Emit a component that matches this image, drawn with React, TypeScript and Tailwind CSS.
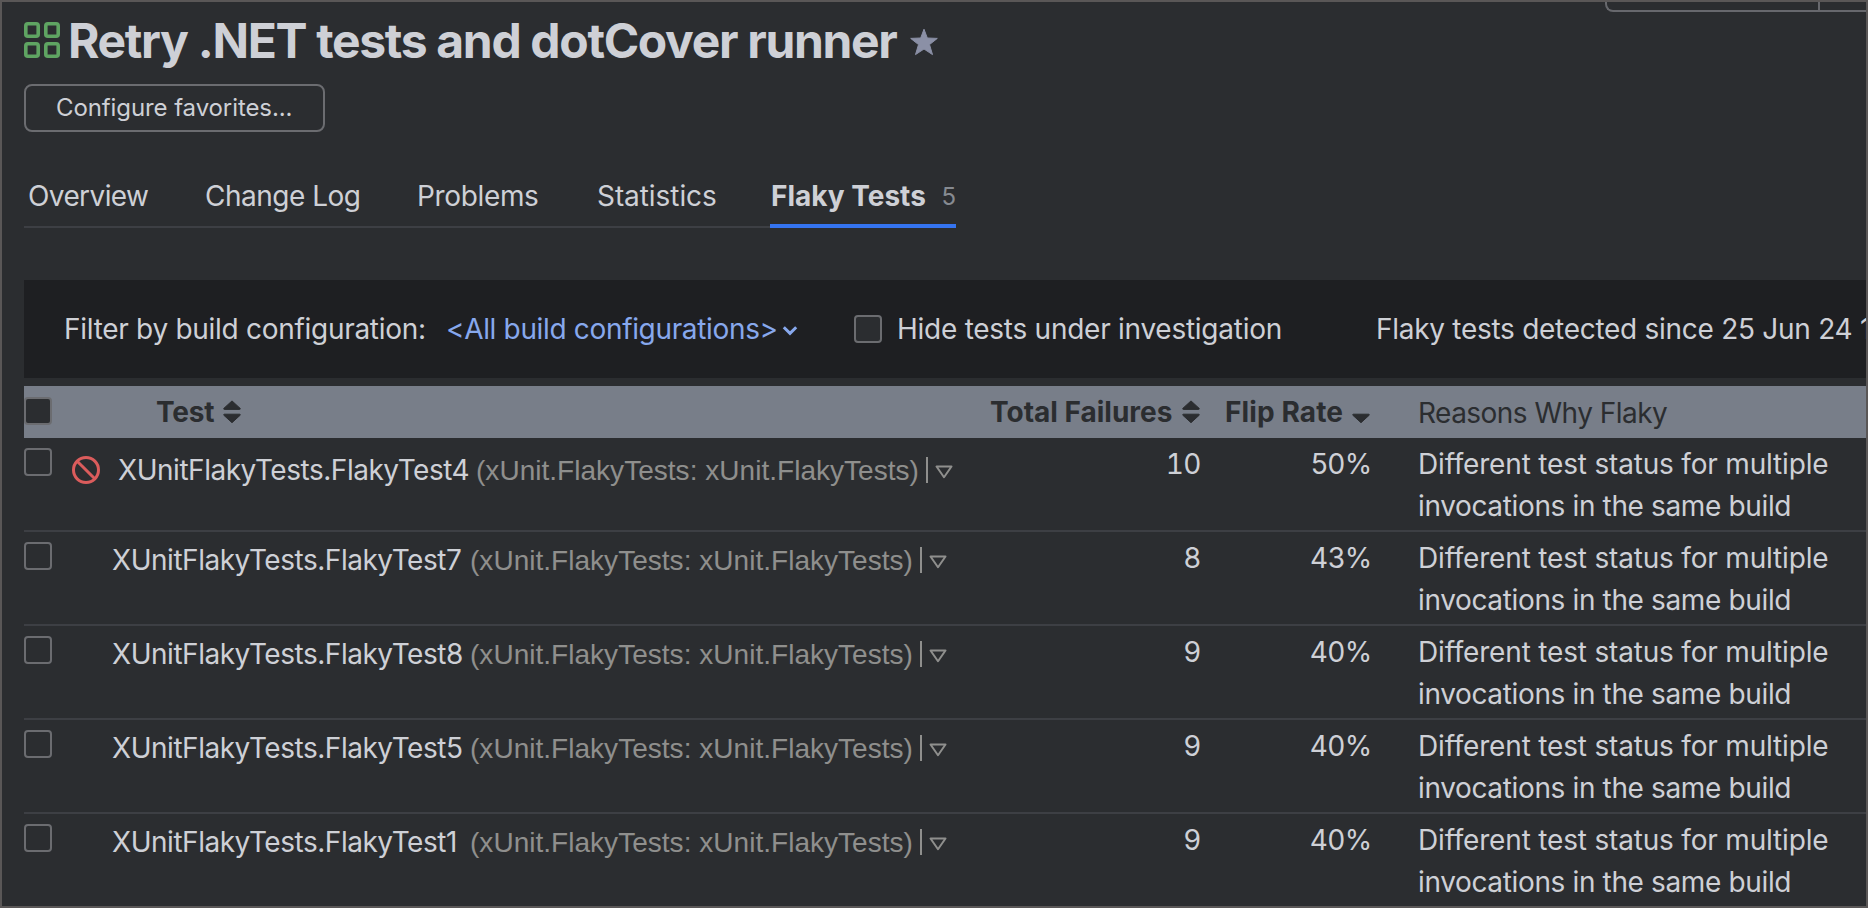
type Test = { name: string; failures: number; flipRate: string; muted?: boolean };

const TESTS: Test[] = [
  { name: "XUnitFlakyTests.FlakyTest4", failures: 10, flipRate: "50%", muted: true },
  { name: "XUnitFlakyTests.FlakyTest7", failures: 8, flipRate: "43%" },
  { name: "XUnitFlakyTests.FlakyTest8", failures: 9, flipRate: "40%" },
  { name: "XUnitFlakyTests.FlakyTest5", failures: 9, flipRate: "40%" },
  { name: "XUnitFlakyTests.FlakyTest1", failures: 9, flipRate: "40%" },
];

function ProjectIcon() {
  return (
    <svg className="mt-5 h-9 w-9 shrink-0" viewBox="0 0 36 36" fill="none" stroke="#5fa462" strokeWidth="3.6">
      <rect x="1.8" y="1.8" width="12.4" height="12.4" rx="2" />
      <rect x="21.8" y="1.8" width="12.4" height="12.4" rx="2" />
      <rect x="1.8" y="21.8" width="12.4" height="12.4" rx="2" />
      <rect x="21.8" y="21.8" width="12.4" height="12.4" rx="2" />
    </svg>
  );
}

function StarIcon() {
  return (
    <svg className="mt-[26px] ml-[10px] h-7 w-7 shrink-0" viewBox="0 0 28 28" fill="#8b90a6" stroke="#8b90a6" strokeWidth="1" strokeLinejoin="round">
      <path d="M14 1.2 L17.3 10 L27.3 10.4 L19.5 16.6 L22.5 26.6 L14 21 L5.500 26.6 L8.500 16.6 L0.700 10.400 L10.700 10 Z" />
    </svg>
  );
}

function SortIcon({ up = true }: { up?: boolean }) {
  return (
    <svg className="h-6 w-[18px] shrink-0" viewBox="0 0 18 24" fill="#2b2d30" stroke="#2b2d30" strokeWidth="1" strokeLinejoin="round">
      {up && <path d="M9 0.900 L17.3 8.500 Q17.300 9.400 16.500 9.400 H1.500 Q0.700 9.400 0.700 8.500 Z" />}
      <path d="M9 22.700 L17.300 15.100 Q17.300 14.200 16.500 14.200 H1.500 Q0.700 14.200 0.700 15.100 Z" />
    </svg>
  );
}

function MutedIcon() {
  return (
    <svg className="mt-[18px] h-7 w-7 shrink-0" viewBox="0 0 28 28" fill="none" stroke="#db5c5c" strokeWidth="3">
      <circle cx="14" cy="14" r="12.500" />
      <path d="M5.200 5.200 L22.800 22.800" />
    </svg>
  );
}

function Checkbox({ className }: { className: string }) {
  return <span className={"block h-7 w-7 shrink-0 rounded-[4px] border-2 border-[#6b6c70] bg-[#2b2d30] " + className} />;
}

function TestRow({ test }: { test: Test }) {
  return (
    <div className="flex h-[94px] shrink-0 border-b-2 border-[#3d3f44]">
      <Checkbox className="mt-2.5" />
      <div className="flex w-[946px] shrink-0 pl-5">
        {test.muted ? <MutedIcon /> : <span className="w-[22px] shrink-0" />}
        <div className={"ml-[18px] flex leading-[42px] " + (test.muted ? "pt-[11px]" : "pt-[7px]")}>
          <span className="w-[358px] shrink-0 tracking-[-0.47px]">{test.name}</span>
          <span className="shrink-0 pt-px font-['Liberation_Sans',Arial,sans-serif] tracking-[0.03px] text-[#8f8f8d]">
            (xUnit.FlakyTests: xUnit.FlakyTests)
          </span>
          <span className="mt-2 ml-[7px] h-[26px] w-[2px] shrink-0 bg-[#8f8f8d]" />
          <svg className="mt-4 ml-[7px] h-[14px] w-[18px] shrink-0" viewBox="0 0 18 14" fill="none" stroke="#8f8f8d" strokeWidth="2" strokeLinejoin="round">
            <path d="M1.500 1.500 H16.500 L9 12.200 Z" />
          </svg>
        </div>
      </div>
      <div className="w-[203px] shrink-0 pt-[5px] text-right leading-[42px] tracking-[-0.5px] tabular-nums">{test.failures}</div>
      <div className="w-[171px] shrink-0 pt-[5px] text-right leading-[42px] tracking-[-0.3px]">{test.flipRate}</div>
      <div className="ml-[46px] shrink-0 pt-[5px] leading-[42px] whitespace-nowrap">
        <p className="tracking-[-0.18px]">Different test status for multiple</p>
        <p className="tracking-[-0.36px]">invocations in the same build</p>
      </div>
    </div>
  );
}

export default function App() {
  return (
    <div className="relative flex h-[908px] w-[1868px] flex-col overflow-hidden border-2 border-[#5a5757] bg-[#2b2d30] pl-[22px] font-['Inter',sans-serif] text-[28px] whitespace-nowrap text-[#ced0d6]">
      <div className="absolute top-0 right-0 flex h-[10px] w-[261px] rounded-bl-[8px] border-b-2 border-l-2 border-[#67686d]">
        <span className="ml-[211px] w-[2px] bg-[#67686d]" />
      </div>

      <header className="flex h-[82px] shrink-0">
        <ProjectIcon />
        <h1 className="ml-[8px] w-[832px] shrink-0 pt-[9px] text-[48px] leading-[60px] font-bold tracking-[-1.33px]">
          Retry .NET tests and dotCover runner
        </h1>
        <StarIcon />
      </header>

      <button className="flex h-12 w-[301px] shrink-0 rounded-[8px] border-2 border-[#6b6c70] pl-[30px] text-[24px] leading-[43px] tracking-[-0.09px]">
        Configure favorites...
      </button>

      <nav className="mt-[41px] flex h-[55px] shrink-0 leading-[46px]">
        <div className="flex w-[746px] border-b-2 border-[#3d3f44] pl-1">
          <span className="w-[177px] tracking-[-0.6px]">Overview</span>
          <span className="w-[212px] tracking-[-0.5px]">Change Log</span>
          <span className="w-[180px] tracking-[-0.35px]">Problems</span>
          <span className="tracking-[-0.07px]">Statistics</span>
        </div>
        <div className="flex w-[186px] border-b-4 border-[#3574f0]">
          <span className="w-[172px] pl-px font-bold">Flaky Tests</span>
          <span className="pt-px text-[24px] text-[#868a91]">5</span>
        </div>
      </nav>

      <section className="mt-[52px] flex h-[98px] shrink-0 items-center bg-[#1e1f22] pl-10 leading-[42px]">
        <span className="w-[382px] shrink-0 tracking-[-0.29px]">Filter by build configuration:</span>
        <span className="w-[332px] shrink-0 tracking-[-0.34px] text-[#87a8ed]">&lt;All build configurations&gt;</span>
        <svg className="mt-1 ml-[4px] h-[10px] w-[16px] shrink-0" viewBox="0 0 16 10" fill="none" stroke="#87a8ed" strokeWidth="3">
          <path d="M1.800 1.200 L8 7.300 L14.200 1.200" />
        </svg>
        <Checkbox className="ml-14" />
        <span className="ml-[15px] w-[479px] shrink-0 tracking-[-0.26px]">Hide tests under investigation</span>
        <span className="shrink-0 tracking-[-0.28px]">Flaky tests detected since 25 Jun 24 1</span>
      </section>

      <section className="mt-2 flex shrink-0 flex-col">
        <div className="flex h-[52px] shrink-0 bg-[#787e89] leading-[42px] text-[#2b2d30]">
          <Checkbox className="mt-[11px]" />
          <div className="flex w-[938px] shrink-0 pl-[104px]">
            <span className="w-[67px] pt-[5px] font-bold tracking-[-0.2px]">Test</span>
            <span className="pt-[14px]"><SortIcon /></span>
          </div>
          <div className="flex w-[235px] shrink-0">
            <span className="w-[192px] pt-[5px] font-bold">Total Failures</span>
            <span className="pt-[14px]"><SortIcon /></span>
          </div>
          <div className="flex w-[193px] shrink-0">
            <span className="w-[127px] pt-[5px] font-bold tracking-[0.12px]">Flip Rate</span>
            <span className="pt-[14px]"><SortIcon up={false} /></span>
          </div>
          <span className="pt-[6px] tracking-[-0.53px]">Reasons Why Flaky</span>
        </div>
        {TESTS.map((test) => (
          <TestRow key={test.name} test={test} />
        ))}
      </section>
    </div>
  );
}
